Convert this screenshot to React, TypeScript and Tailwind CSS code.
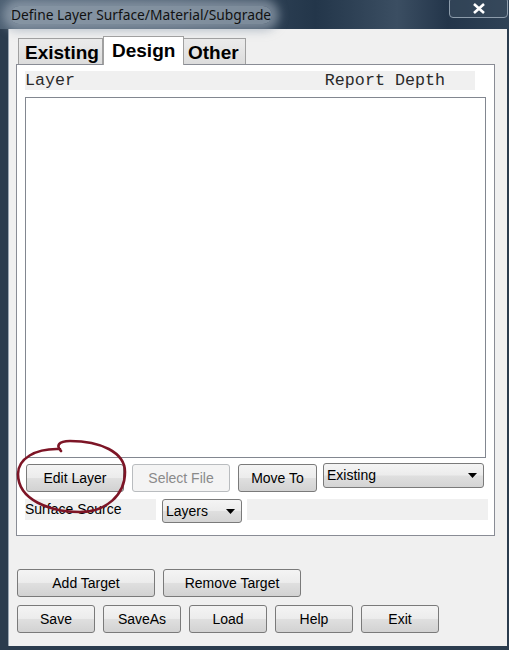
import clsx from "clsx";

const sans = "font-['Liberation_Sans',Arial,sans-serif]";

function Btn({ label, className, disabled }: { label: string; className?: string; disabled?: boolean }) {
  return (
    <button
      type="button"
      className={clsx(
        "flex h-[28px] items-center justify-center rounded-[3px] border text-[14px] leading-none",
        sans,
        disabled
          ? "border-[#b9bcbf] bg-[#f4f4f4] text-[#8a8a8a]"
          : "border-[#7a7a7a] bg-[linear-gradient(#f4f4f4,#ececec_48%,#dfdfdf_52%,#d2d2d2)] text-black",
        className
      )}
    >
      {label}
    </button>
  );
}

function Combo({ label, className }: { label: string; className?: string }) {
  return (
    <div
      className={clsx(
        "flex items-start justify-between rounded-[3px] border border-[#7a7a7a] bg-[linear-gradient(#f4f4f4,#ececec_48%,#dfdfdf_52%,#d4d4d4)] pl-[3px] pr-[6px] pt-px text-[14px] leading-[20px] text-black",
        sans,
        className
      )}
    >
      <span>{label}</span>
      <svg width="9" height="5" viewBox="0 0 9 5" className="mt-[8px]">
        <path d="M0 0H9L4.5 5Z" fill="#000" />
      </svg>
    </div>
  );
}

export default function App() {
  return (
    <div className="relative flex h-[650px] w-[509px] flex-col overflow-hidden bg-[#2b3c4e]">
      {/* Title bar */}
      <div className="relative flex h-[29px] shrink-0 items-center bg-[linear-gradient(90deg,#4d6073,#3f5265_35%,#23364a_62%,#3b4e62_78%,#23354a_88%,#2f4256)]">
        <span
          className={clsx(
            "ml-[10px] rounded-full bg-[#9eabb8]/70 px-[1px] text-[13.8px] leading-[18px] text-[#111] shadow-[0_0_10px_7px_rgba(158,171,184,0.65)]",
            "font-['Noto_Sans',sans-serif]"
          )}
        >
          Define Layer Surface/Material/Subgrade
        </span>
        <div className="absolute right-[1px] top-[-3px] flex h-[21px] w-[59px] items-center justify-center rounded-[4px] border border-[#8d9cab] bg-[#3a4c5f]/60">
          <svg width="14" height="11" viewBox="0 0 14 11" className="mt-[2px]">
            <path d="M2 1L12 10M12 1L2 10" stroke="#fff" strokeWidth="2.6" />
          </svg>
        </div>
      </div>

      {/* Client area */}
      <div className="mb-[4px] ml-[8px] mr-[2px] flex flex-1 flex-col border-l border-[#9aa6b2] bg-[#f0f0f0]">
        <div className="ml-[7px] mt-[7px] w-[479px]">
          {/* Tabs */}
          <div className="flex h-[28px] items-end pl-[2px]">
            <div className="box-border h-[26px] w-[85px] border border-b-0 border-[#a0a0a0] bg-[linear-gradient(#ececec,#dcdcdc)] pl-[6px] pt-[4px]">
              <span className={clsx("block text-[19px] font-bold leading-none text-black", sans)}>Existing</span>
            </div>
            <div className="relative z-10 -mb-px box-border h-[29px] w-[81px] border border-b-0 border-[#a0a0a0] bg-white pl-[8px] pt-[4px]">
              <span className={clsx("block text-[19px] font-bold leading-none text-black", sans)}>Design</span>
            </div>
            <div className="box-border h-[26px] w-[62px] border border-b-0 border-l-0 border-[#a0a0a0] bg-[linear-gradient(#ececec,#dcdcdc)] pl-[4px] pt-[4px]">
              <span className={clsx("block text-[19px] font-bold leading-none text-black", sans)}>Other</span>
            </div>
          </div>

          {/* Tab panel */}
          <div className="box-border flex h-[472px] flex-col border border-[#898c95] bg-white">
            <div className="ml-[8px] mt-[6px] flex h-[19px] w-[450px] justify-between bg-[#f0f0f0] pr-[30px] pt-px font-['Liberation_Mono',monospace] text-[16.7px] leading-[18px] text-[#2a2a2a]">
              <span>Layer</span>
              <span>Report Depth</span>
            </div>
            <div className="ml-[8px] mt-[7px] h-[361px] w-[461px] border border-[#828790] bg-white" />

            <div className="ml-[9px] mt-[5px] flex items-start">
              <Btn label="Edit Layer" className="mt-px w-[98px]" />
              <Btn label="Select File" disabled className="ml-[8px] mt-px w-[98px]" />
              <Btn label="Move To" className="ml-[8px] mt-px w-[79px]" />
              <Combo label="Existing" className="ml-[6px] h-[25px] w-[161px]" />
            </div>

            <div className="ml-[8px] mt-[7px] flex items-start">
              <div className={clsx("h-[21px] w-[131px] bg-[#f0f0f0] text-[14px] leading-[20px] text-black", sans)}>
                Surface Source
              </div>
              <Combo label="Layers" className="ml-[6px] h-[24px] w-[80px]" />
              <div className="ml-[5px] h-[21px] w-[241px] bg-[#f0f0f0]" />
            </div>
          </div>
        </div>

        {/* Bottom buttons */}
        <div className="ml-[8px] mt-[33px] flex gap-[8px]">
          <Btn label="Add Target" className="w-[138px]" />
          <Btn label="Remove Target" className="w-[138px]" />
        </div>
        <div className="ml-[8px] mt-[8px] flex gap-[8px]">
          <Btn label="Save" className="w-[78px]" />
          <Btn label="SaveAs" className="w-[78px]" />
          <Btn label="Load" className="w-[78px]" />
          <Btn label="Help" className="w-[78px]" />
          <Btn label="Exit" className="w-[78px]" />
        </div>
      </div>

      {/* Hand-drawn red annotation around Edit Layer */}
      <svg className="pointer-events-none absolute left-0 top-0" width="509" height="650" viewBox="0 0 509 650">
        <path
          d="M61 451 C56 446 58 441 70 441 C100 441 125 452 125 472 C125 495 106 512 80 512 C50 512 18 500 18 474 C18 459 35 448 60 449"
          fill="none"
          stroke="#7d1526"
          strokeWidth="2.6"
          strokeLinecap="round"
        />
      </svg>
    </div>
  );
}
